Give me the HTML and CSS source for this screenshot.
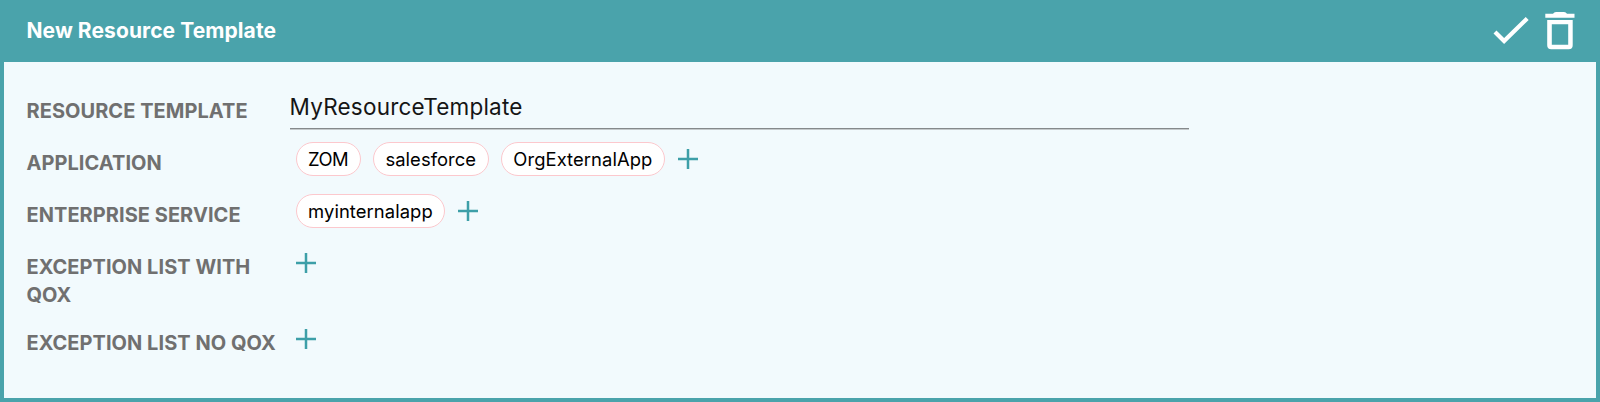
FILE: index.html
```html
<!DOCTYPE html>
<html lang="en"><head><meta charset="utf-8"><title>New Resource Template</title><link rel="stylesheet" href="styles.css"></head>
<body>
<main class="panel">
<header class="bar"><h1>New Resource Template</h1>
<div class="actions">
<svg width="38" height="40" viewBox="0 0 38 40"><path class="stroke" d="m3 21 9.1 9.1L35.2 7.4"/></svg>
<svg width="30" height="40" viewBox="0 0 30 40"><path d="M8 2.8Q9 1 11 1h8q2 0 3 1.8h7.5v4H.3v-4zM2.2 8.9h25.5v25.3a4 4 0 0 1-4 4H6.2a4 4 0 0 1-4-4zM6.8 13.2v20.6h16.4V13.2z" fill-rule="evenodd"/></svg>
</div></header>
<section class="form">
<div class="row"><label>RESOURCE TEMPLATE</label><div class="field">MyResourceTemplate</div></div>
<div class="row"><label>APPLICATION</label><div class="chips"><span class="chip short">ZOM</span><span class="chip">salesforce</span><span class="chip">OrgExternalApp</span><svg class="plus" viewBox="0 0 20 20"><path d="M10 0v20M0 10h20"/></svg></div></div>
<div class="row"><label>ENTERPRISE SERVICE</label><div class="chips"><span class="chip">myinternalapp</span><svg class="plus" viewBox="0 0 20 20"><path d="M10 0v20M0 10h20"/></svg></div></div>
<div class="row tall"><label>EXCEPTION LIST WITH QOX</label><div class="chips"><svg class="plus" viewBox="0 0 20 20"><path d="M10 0v20M0 10h20"/></svg></div></div>
<div class="row"><label>EXCEPTION LIST NO QOX</label><div class="chips"><svg class="plus" viewBox="0 0 20 20"><path d="M10 0v20M0 10h20"/></svg></div></div>
</section>
</main>
</body></html>
```
FILE: styles.css
```css
* { box-sizing: border-box; }
body { margin: 0; font-family: Inter, sans-serif; }
.panel { height: 402px; background: #f2fafd; border: 4px solid #4aa3ab; border-top: 0; }
.bar { height: 62px; background: #4aa3ab; display: flex; justify-content: space-between; padding: 0 21px 0 22.5px; }
.bar h1 { margin: 0; font-size: 21px; line-height: 61px; font-weight: 700; color: #fff; letter-spacing: .08px; }
.actions { display: flex; gap: 15px; padding-top: 10.5px; }
.actions svg { fill: #fff; }
.actions .stroke { fill: none; stroke: #fff; stroke-width: 4.2; }
.form { padding: 28px 22.5px 0; }
.row { display: grid; grid-template-columns: 263px 899px; height: 52px; }
.row.tall { height: 76px; }
.row label { font-size: 20px; font-weight: 700; line-height: 28px; letter-spacing: .05px; color: #707070; padding-top: 7px; }
.field { height: 39px; border-bottom: 1px solid #85898b; box-shadow: 0 1px #c4c9cb; font-size: 22.5px; line-height: 33px; letter-spacing: .22px; color: #151515; }
.chips { display: flex; align-items: center; height: 34px; padding-left: 6px; gap: 12px; }
.chip { height: 34px; border: 1px solid #fcc8cd; border-radius: 17px; background: #fff; font-size: 18.4px; line-height: 33px; letter-spacing: .07px; padding: 0 11.6px; }
.chip.short { letter-spacing: -.5px; }
.plus { width: 20px; height: 20px; fill: none; stroke: #3d9fa8; stroke-width: 2.5; margin-left: .8px; }
```
